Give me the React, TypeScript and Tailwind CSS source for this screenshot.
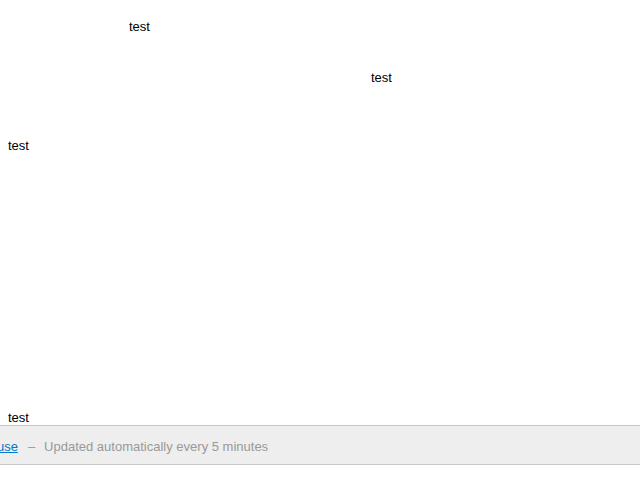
export default function App() {
  return (
    <div className="w-[640px] h-[480px] bg-white overflow-hidden text-[13px] leading-[15px] text-black font-['Liberation_Sans',Arial,sans-serif]">
      {/* free canvas of widgets */}
      <div className="relative h-[425px]">
        <div className="absolute left-[129px] top-[19px]">test</div>
        <div className="absolute left-[371px] top-[70px]">test</div>
        <div className="absolute left-[8px] top-[138px]">test</div>
        <div className="absolute left-[8px] top-[410px]">test</div>
      </div>
      <div className="h-[40px] pt-[2px] border-y border-[#c8c8c8] bg-[#eeeeee] flex items-center overflow-hidden whitespace-nowrap">
        <div className="-ml-[19px] flex items-center text-[#999999]">
          <a href="#" className="text-[#0077cc] underline">Pause</a>
          <span className="pl-[10px] pr-[9px]">–</span>
          <span>Updated automatically every 5 minutes</span>
        </div>
      </div>
    </div>
  );
}
